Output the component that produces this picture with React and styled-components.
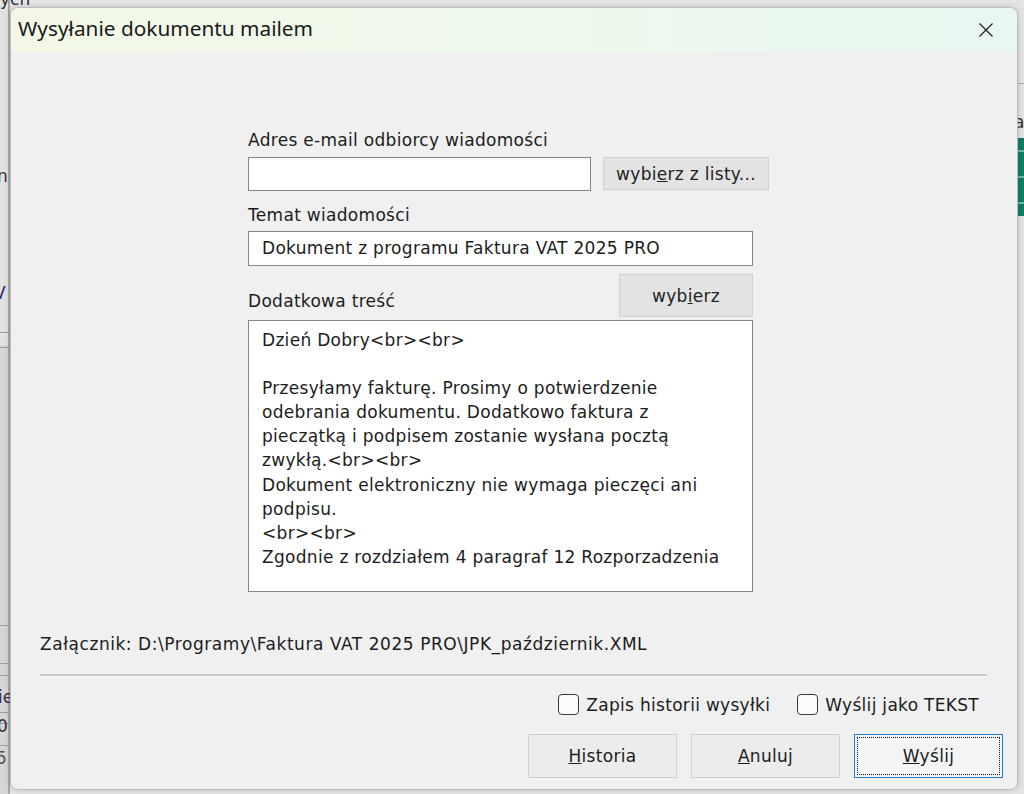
import React from 'react';
import styled, { createGlobalStyle } from 'styled-components';

const Global = createGlobalStyle`
  html, body { margin: 0; padding: 0; }
  body {
    width: 1024px;
    height: 794px;
    overflow: hidden;
    font-family: "DejaVu Sans", "Liberation Sans", sans-serif;
    color: #1c1c1c;
  }
`;

const Desktop = styled.div`
  position: relative;
  width: 1024px;
  height: 794px;
  overflow: hidden;
  box-sizing: border-box;
  padding: 7px 6px 4px 10px;
  display: flex;
  background: #e6e6e6;
`;

/* ---- background application, partly hidden behind the dialog ---- */
const BgLayer = styled.div`
  position: absolute;
  inset: 0;
  z-index: 0;
`;

const BgPiece = styled.div`
  position: absolute;
  left: ${(p) => p.$x}px;
  top: ${(p) => p.$y}px;
  width: ${(p) => p.$w}px;
  height: ${(p) => p.$h}px;
  background: ${(p) => p.$bg || 'transparent'};
`;

const BgText = styled.div`
  position: absolute;
  left: ${(p) => p.$x}px;
  top: ${(p) => p.$y}px;
  font-size: 17px;
  line-height: 20px;
  color: ${(p) => p.$color || '#333'};
  white-space: nowrap;
`;

const Background = () => (
  <BgLayer>
    <BgPiece $x={0} $y={0} $w={10} $h={794} $bg="#e2e2e2" />
    <BgPiece $x={0} $y={345} $w={10} $h={449} $bg="#d6d6d6" />
    <BgPiece $x={8} $y={0} $w={2} $h={794} $bg="#a9a9a9" />
    <BgPiece $x={0} $y={332} $w={10} $h={1} $bg="#9a9a9a" />
    <BgPiece $x={0} $y={347} $w={10} $h={1} $bg="#9a9a9a" />
    <BgPiece $x={0} $y={625} $w={10} $h={1} $bg="#a0a0a0" />
    <BgPiece $x={0} $y={663} $w={10} $h={1} $bg="#a0a0a0" />
    <BgPiece $x={0} $y={675} $w={10} $h={1} $bg="#a0a0a0" />
    <BgPiece $x={0} $y={712} $w={10} $h={1} $bg="#a0a0a0" />
    <BgPiece $x={0} $y={723} $w={10} $h={1} $bg="#a0a0a0" />
    <BgPiece $x={0} $y={745} $w={10} $h={1} $bg="#a0a0a0" />
    <BgText $x={0} $y={-11}>ych</BgText>
    <BgText $x={-3} $y={166}>n</BgText>
    <BgText $x={-6} $y={283} $color="#22227a">V</BgText>
    <BgText $x={-2} $y={687} $color="#3a2a4a">ie</BgText>
    <BgText $x={-3} $y={716}>0</BgText>
    <BgText $x={-4} $y={748} $color="#555">5</BgText>
    <BgPiece $x={1016} $y={0} $w={8} $h={794} $bg="#e4e4e4" />
    <BgPiece $x={1016} $y={83} $w={8} $h={1} $bg="#b0b0b0" />
    <BgText $x={1014} $y={112}>a</BgText>
    <BgPiece $x={1016} $y={138} $w={8} $h={78} $bg="#157a6e" />
    <BgPiece $x={1016} $y={150} $w={8} $h={2} $bg="#6fb5ac" />
    <BgPiece $x={1016} $y={176} $w={8} $h={2} $bg="#6fb5ac" />
    <BgPiece $x={1016} $y={202} $w={8} $h={2} $bg="#6fb5ac" />
  </BgLayer>
);

/* ---- dialog ---- */
const Dialog = styled.div`
  position: relative;
  z-index: 1;
  flex: 1;
  display: flex;
  flex-direction: column;
  background: #f0f0f0;
  border: 1px solid #bdbdbd;
  border-radius: 8px;
  overflow: hidden;
  box-shadow: 0 0 6px rgba(0, 0, 0, 0.18);
`;

const TitleBar = styled.div`
  height: 44px;
  flex: none;
  display: flex;
  align-items: center;
  justify-content: space-between;
  padding: 0 0 0 7px;
  background: linear-gradient(90deg, #f3f8e6 0%, #eef8ec 50%, #e8f7f0 100%);
`;

const Title = styled.div`
  font-family: "Noto Sans", "Open Sans", sans-serif;
  font-size: 20.8px;
  color: #1a1a1a;
  margin-top: -4px;
`;

const CloseButton = styled.div`
  width: 62px;
  height: 44px;
  display: flex;
  align-items: center;
  justify-content: center;
  margin-top: -1px;
`;

const Body = styled.div`
  flex: 1;
  display: flex;
  flex-direction: column;
  padding: 0 14px 0 28px;
`;

const FormColumn = styled.div`
  width: 505px;
  margin-left: 209px;
  margin-top: 78px;
  display: flex;
  flex-direction: column;
`;

const textStyle = `
  font-size: 17px;
  letter-spacing: 0.3px;
`;

const Label = styled.div`
  ${textStyle}
  line-height: 20px;
  height: 20px;
  margin-top: ${(p) => p.$mt || 0}px;
  margin-bottom: ${(p) => p.$mb || 0}px;
`;

const Row = styled.div`
  display: flex;
  align-items: ${(p) => p.$align || 'flex-start'};
  justify-content: ${(p) => p.$justify || 'flex-start'};
  gap: ${(p) => p.$gap || 0}px;
  margin-top: ${(p) => p.$mt || 0}px;
`;

const Input = styled.div`
  ${textStyle}
  flex: none;
  box-sizing: border-box;
  width: ${(p) => p.$w}px;
  height: ${(p) => p.$h}px;
  margin-top: ${(p) => p.$mt || 0}px;
  background: #fff;
  border: 1px solid #858585;
  padding: 0 13px;
  line-height: ${(p) => p.$h - 2}px;
  white-space: nowrap;
`;

const TextArea = styled.div`
  ${textStyle}
  box-sizing: border-box;
  width: 505px;
  height: 272px;
  margin-top: 3px;
  background: #fff;
  border: 1px solid #858585;
  padding: 7px 13px;
  line-height: 24.1px;
  white-space: pre-line;
`;

const SmallButton = styled.div`
  ${textStyle}
  flex: none;
  box-sizing: border-box;
  width: ${(p) => p.$w}px;
  height: ${(p) => p.$h}px;
  display: flex;
  align-items: center;
  justify-content: center;
  background: #e3e3e3;
  border: 1px solid #d2d2d2;
  color: #222;
  margin-top: ${(p) => p.$mt || 0}px;
`;

const Attachment = styled.div`
  ${textStyle}
  letter-spacing: 0.55px;
  margin-top: 42px;
  margin-left: 1px;
  line-height: 20px;
`;

const Separator = styled.div`
  margin-top: 20px;
  margin-right: 16px;
  margin-left: 1px;
  height: 2px;
  background: #c8c8c8;
  border-bottom: 1px solid #fafafa;
`;

const CheckRow = styled.div`
  display: flex;
  justify-content: flex-end;
  align-items: center;
  gap: 27px;
  margin-top: 17px;
  margin-right: 24px;
`;

const CheckItem = styled.label`
  ${textStyle}
  display: flex;
  align-items: center;
  gap: 7px;
  line-height: 20px;
`;

const CheckBox = styled.span`
  box-sizing: border-box;
  width: 21px;
  height: 21px;
  border: 1.5px solid #3a3a3a;
  border-radius: 4px;
  background: #fbfbfb;
`;

const ButtonRow = styled.div`
  display: flex;
  justify-content: flex-end;
  gap: 14px;
  margin-top: 19px;
`;

const DialogButton = styled.div`
  ${textStyle}
  position: relative;
  box-sizing: border-box;
  width: 149px;
  height: 44px;
  display: flex;
  align-items: center;
  justify-content: center;
  color: #1c1c1c;
  background: ${(p) => (p.$default ? '#f4f4f4' : '#ececec')};
  border: 1px solid ${(p) => (p.$default ? '#1a7fd4' : '#d0d0d0')};
  ${(p) =>
    p.$default &&
    `
    &::after {
      content: '';
      position: absolute;
      inset: 2px;
      border: 1px dotted #1a1a1a;
    }
  `}
`;

const CloseIcon = () => (
  <svg width="16" height="16" viewBox="0 0 16 16">
    <path d="M1.5 1.5 L14.5 14.5 M14.5 1.5 L1.5 14.5" stroke="#1f1f1f" strokeWidth="1.2" fill="none" />
  </svg>
);

const message = `Dzień Dobry<br><br>

Przesyłamy fakturę. Prosimy o potwierdzenie
odebrania dokumentu. Dodatkowo faktura z
pieczątką i podpisem zostanie wysłana pocztą
zwykłą.<br><br>
Dokument elektroniczny nie wymaga pieczęci ani
podpisu.
<br><br>
Zgodnie z rozdziałem 4 paragraf 12 Rozporzadzenia`;

export default function App() {
  return (
    <>
      <Global />
      <Desktop>
        <Background />
        <Dialog>
          <TitleBar>
            <Title>Wysyłanie dokumentu mailem</Title>
            <CloseButton>
              <CloseIcon />
            </CloseButton>
          </TitleBar>
          <Body>
            <FormColumn>
              <Label>Adres e-mail odbiorcy wiadomości</Label>
              <Row $gap={12} $mt={7}>
                <Input $w={343} $h={34} />
                <SmallButton $w={166} $h={33}>
                  wybi<u>e</u>rz z listy...
                </SmallButton>
              </Row>
              <Label $mt={14}>Temat wiadomości</Label>
              <Input $w={505} $h={35} $mt={6}>
                Dokument z programu Faktura VAT 2025 PRO
              </Input>
              <Row $justify="space-between" $align="flex-end" $mt={8}>
                <Label $mb={6}>Dodatkowa treść</Label>
                <SmallButton $w={134} $h={43}>
                  wyb<u>i</u>erz
                </SmallButton>
              </Row>
              <TextArea>{message}</TextArea>
            </FormColumn>
            <Attachment>Załącznik: D:\Programy\Faktura VAT 2025 PRO\JPK_październik.XML</Attachment>
            <Separator />
            <CheckRow>
              <CheckItem>
                <CheckBox />
                Zapis historii wysyłki
              </CheckItem>
              <CheckItem>
                <CheckBox />
                Wyślij jako TEKST
              </CheckItem>
            </CheckRow>
            <ButtonRow>
              <DialogButton>
                <span><u>H</u>istoria</span>
              </DialogButton>
              <DialogButton>
                <span><u>A</u>nuluj</span>
              </DialogButton>
              <DialogButton $default>
                <span><u>W</u>yślij</span>
              </DialogButton>
            </ButtonRow>
          </Body>
        </Dialog>
      </Desktop>
    </>
  );
}
